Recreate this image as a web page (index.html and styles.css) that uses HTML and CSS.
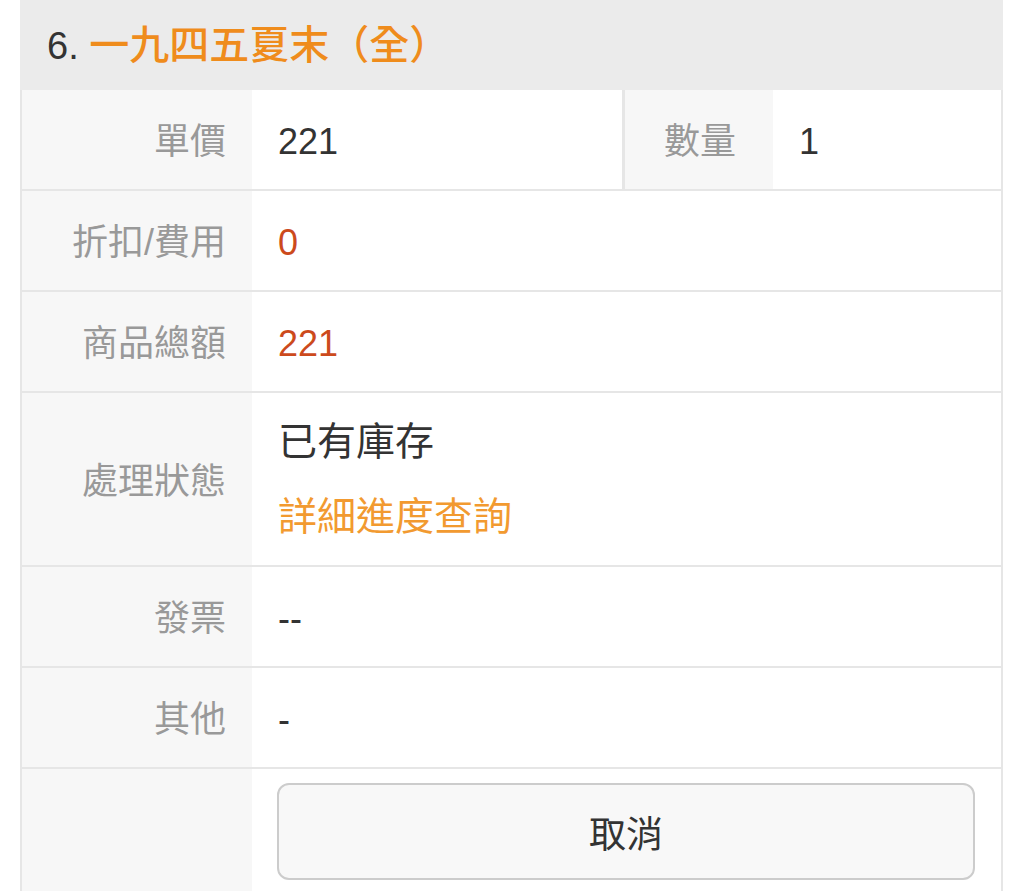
FILE: index.html
```html
<!DOCTYPE html>
<html lang="zh-Hant">
<head>
    <meta charset="UTF-8">
    <meta name="viewport" content="width=device-width, initial-scale=1.0">
    <title>訂單明細</title>
    <link rel="stylesheet" href="styles.css">
</head>
<body>
    <div class="order-item">
        <div class="item-title">6. <span class="item-name">一九四五夏末（全）</span></div>
        <table class="item-table">
            <colgroup>
                <col class="col-label">
                <col class="col-value">
                <col class="col-label2">
                <col class="col-value2">
            </colgroup>
            <tr>
                <th>單價</th>
                <td>221</td>
                <th class="divided">數量</th>
                <td>1</td>
            </tr>
            <tr>
                <th>折扣/費用</th>
                <td colspan="3" class="price">0</td>
            </tr>
            <tr>
                <th>商品總額</th>
                <td colspan="3" class="price">221</td>
            </tr>
            <tr>
                <th>處理狀態</th>
                <td colspan="3" class="status">
                    <div>已有庫存</div>
                    <div><a href="#" class="link">詳細進度查詢</a></div>
                </td>
            </tr>
            <tr>
                <th>發票</th>
                <td colspan="3">--</td>
            </tr>
            <tr>
                <th>其他</th>
                <td colspan="3">-</td>
            </tr>
            <tr>
                <th></th>
                <td colspan="3" class="actions">
                    <button class="button">取消</button>
                </td>
            </tr>
        </table>
    </div>
</body>
</html>
```

FILE: styles.css
```css
body {
    font-family: "Liberation Sans", "Noto Sans CJK TC", sans-serif;
    margin: 0;
    padding: 0;
    background-color: white;
    color: #333;
}
.order-item {
    width: 983px;
    margin-left: 20px;
    box-sizing: border-box;
}
.item-title {
    height: 90px;
    line-height: 90px;
    padding-left: 27px;
    font-size: 38px;
    background-color: #ebebeb;
}
.item-name {
    font-size: 40px;
    font-weight: 500;
    color: #ef8c1c;
}
.item-table {
    width: 983px;
    table-layout: fixed;
    border-collapse: separate;
    border-spacing: 0;
    border-left: 2px solid #e6e6e6;
    border-right: 2px solid #e6e6e6;
    font-size: 36px;
}
.col-label {
    width: 230px;
}
.col-value {
    width: 370px;
}
.col-label2 {
    width: 151px;
}
.col-value2 {
    width: 228px;
}
.item-table th,
.item-table td {
    padding: 26px 26px 22px;
    line-height: 51px;
    border-bottom: 2px solid #e6e6e6;
    vertical-align: middle;
}
.item-table th {
    text-align: right;
    font-weight: normal;
    color: #999;
    background-color: #f7f7f7;
}
.item-table td {
    text-align: left;
    color: #333;
}
.item-table th.divided {
    border-left: 3px solid #e6e6e6;
    padding-right: 37px;
}
.item-table td.price {
    color: #cc4a1c;
}
.item-table td.status {
    padding-top: 23px;
    padding-bottom: 23px;
    font-size: 39px;
}
.status div + div {
    margin-top: 24px;
}
.link {
    color: #f29a30;
    text-decoration: none;
}
.item-table td.actions {
    padding: 14px 26px 14px 25px;
}
.button {
    display: block;
    width: 100%;
    height: 97px;
    font-family: inherit;
    font-size: 37px;
    color: #333;
    background-color: #f8f8f8;
    border: 2px solid #cccccc;
    border-radius: 12px;
}
```
